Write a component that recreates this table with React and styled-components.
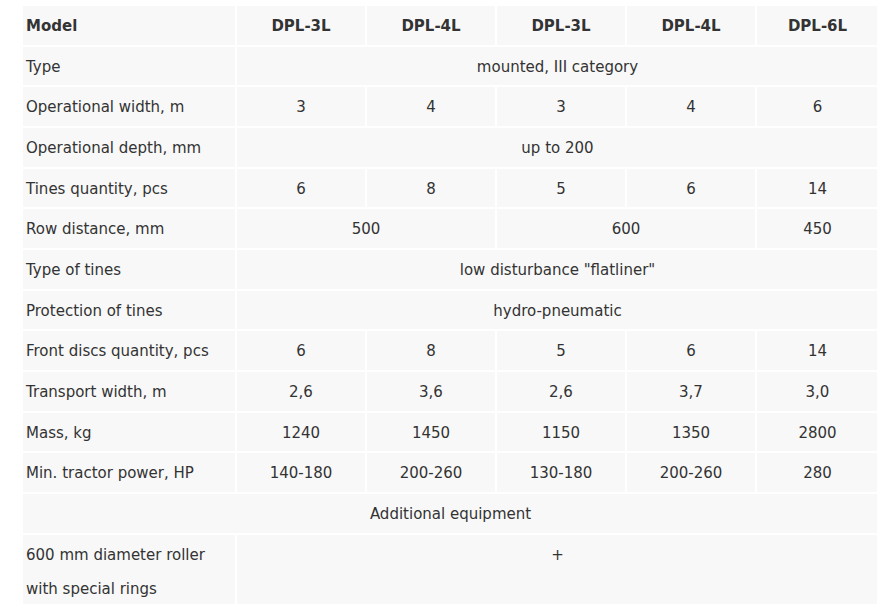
import React from "react";
import styled, { createGlobalStyle } from "styled-components";

const Global = createGlobalStyle`
  html, body { margin: 0; padding: 0; background: #fff; overflow: hidden; }
  body { font-family: Verdana, "DejaVu Sans", sans-serif; color: #333; }
`;

const Page = styled.div`
  padding: 4px 0 0 21px;
  width: 900px;
`;

const Table = styled.table`
  border-collapse: separate;
  border-spacing: 2px;
  table-layout: fixed;
  width: ${212 + 128 * 4 + 121 + 14}px;
  font-size: 15px;
`;

const Cell = styled.td`
  background: #f8f8f8;
  padding: 3px 3px 1.67px;
  line-height: 34px;
  text-align: ${(p) => (p.$center ? "center" : "left")};
  font-weight: ${(p) => (p.$bold ? 700 : 400)};
  vertical-align: top;
  white-space: nowrap;
  overflow: hidden;
`;

const Col = styled.col`
  width: ${(p) => p.$w}px;
`;

const models = ["DPL-3L", "DPL-4L", "DPL-3L", "DPL-4L", "DPL-6L"];

const rows = [
  ["Type", [["mounted, III category", 5]]],
  ["Operational width, m", ["3", "4", "3", "4", "6"]],
  ["Operational depth, mm", [["up to 200", 5]]],
  ["Tines quantity, pcs", ["6", "8", "5", "6", "14"]],
  ["Row distance, mm", [["500", 2], ["600", 2], "450"]],
  ["Type of tines", [['low disturbance "flatliner"', 5]]],
  ["Protection of tines", [["hydro-pneumatic", 5]]],
  ["Front discs quantity, pcs", ["6", "8", "5", "6", "14"]],
  ["Transport width, m", ["2,6", "3,6", "2,6", "3,7", "3,0"]],
  ["Mass, kg", ["1240", "1450", "1150", "1350", "2800"]],
  ["Min. tractor power, HP", ["140-180", "200-260", "130-180", "200-260", "280"]],
];

export default function App() {
  return (
    <Page>
      <Global />
      <Table>
        <colgroup>
          <Col $w={212} />
          <Col $w={128} />
          <Col $w={128} />
          <Col $w={128} />
          <Col $w={128} />
          <Col $w={121} />
        </colgroup>
        <tbody>
          <tr>
            <Cell $bold>Model</Cell>
            {models.map((m, i) => (
              <Cell key={i} $bold $center>
                {m}
              </Cell>
            ))}
          </tr>
          {rows.map(([label, vals]) => (
            <tr key={label}>
              <Cell>{label}</Cell>
              {vals.map((v, i) =>
                Array.isArray(v) ? (
                  <Cell key={i} $center colSpan={v[1]}>
                    {v[0]}
                  </Cell>
                ) : (
                  <Cell key={i} $center>
                    {v}
                  </Cell>
                )
              )}
            </tr>
          ))}
          <tr>
            <Cell $center colSpan={6}>
              Additional equipment
            </Cell>
          </tr>
          <tr>
            <Cell>
              600 mm diameter roller
              <br />
              with special rings
            </Cell>
            <Cell $center colSpan={5}>
              +
            </Cell>
          </tr>
        </tbody>
      </Table>
    </Page>
  );
}
